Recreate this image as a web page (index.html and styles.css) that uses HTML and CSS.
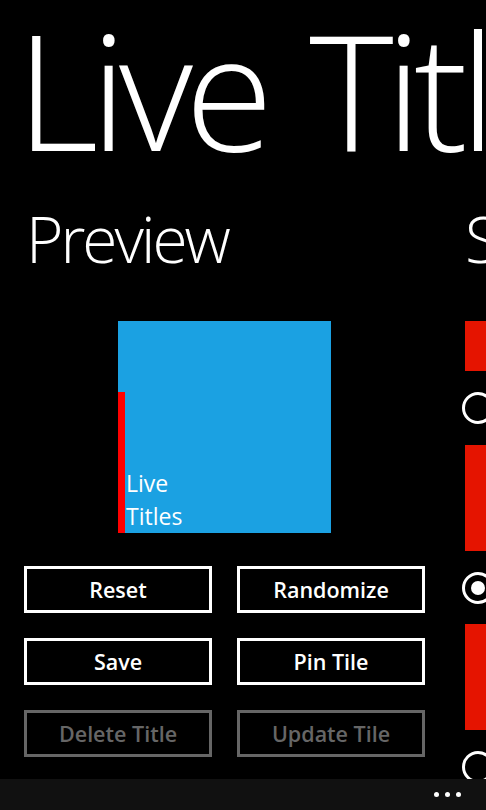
FILE: index.html
```html
<!DOCTYPE html>
<html>
<head>
<meta charset="utf-8">
<link rel="stylesheet" href="styles.css">
</head>
<body>
<div class="screen">
  <div class="panorama">
    <div class="pano-title">Live Titles</div>
    <div class="sections">
      <section class="section preview">
        <h2 class="section-header">Preview</h2>
        <div class="tile">
          <div class="tile-bar"></div>
          <div class="tile-text">Live<br>Titles</div>
        </div>
        <div class="buttons">
          <button class="btn">Reset</button>
          <button class="btn">Randomize</button>
          <button class="btn">Save</button>
          <button class="btn">Pin Tile</button>
          <button class="btn disabled">Delete Title</button>
          <button class="btn disabled">Update Tile</button>
        </div>
      </section>
      <section class="section settings">
        <h2 class="section-header">Settings</h2>
        <div class="swatch s1"></div>
        <div class="radio"></div>
        <div class="swatch s2"></div>
        <div class="radio checked"></div>
        <div class="swatch s3"></div>
        <div class="radio"></div>
      </section>
    </div>
  </div>
  <div class="appbar">
    <div class="dots"><span></span><span></span><span></span></div>
  </div>
</div>
</body>
</html>
```
FILE: styles.css
```css
html, body {
  margin: 0;
  padding: 0;
  background: #000;
}
body {
  width: 486px;
  height: 810px;
  overflow: hidden;
  font-family: "Open Sans", "Noto Sans", sans-serif;
  color: #fff;
}
.screen {
  display: flex;
  flex-direction: column;
  height: 810px;
}
.panorama {
  flex: 1;
  overflow: hidden;
  display: flex;
  flex-direction: column;
}
.pano-title {
  font-size: 161px;
  font-weight: 300;
  line-height: 161px;
  white-space: nowrap;
  margin-top: 8px;
  padding-left: 16px;
  letter-spacing: -8px;
  word-spacing: 10px;
}
.sections {
  display: flex;
  margin-top: 30px;
}
.section {
  flex: none;
}
.preview {
  width: 465px;
  padding-left: 24px;
  box-sizing: border-box;
}
.section-header {
  margin: 0;
  font-size: 64px;
  font-weight: 300;
  line-height: 80px;
  white-space: nowrap;
  padding-left: 2px;
  letter-spacing: -3px;
}
.tile {
  width: 213px;
  height: 212px;
  margin: 42px 0 0 94px;
  background: #1ba1e2;
  display: flex;
  align-items: flex-end;
}
.tile-bar {
  width: 7px;
  height: 141px;
  background: #ff0000;
}
.tile-text {
  font-family: "Open Sans", sans-serif;
  font-size: 23px;
  line-height: 33px;
  padding-left: 1px;
  padding-bottom: 0;
}
.buttons {
  display: grid;
  grid-template-columns: 188px 188px;
  column-gap: 25px;
  row-gap: 25px;
  margin-top: 33px;
}
.btn {
  height: 47px;
  background: #000;
  border: 3px solid #fff;
  color: #fff;
  font-family: "Open Sans", sans-serif;
  font-weight: 600;
  font-size: 21.5px;
  padding: 0;
}
.btn.disabled {
  border-color: #666;
  color: #666;
}
.settings {
  width: 300px;
}
.settings .section-header {
  padding-left: 0;
}
.swatch {
  background: #e51400;
  width: 60px;
}
.s1 { height: 50px; margin-top: 42px; }
.s2 { height: 106px; margin-top: 21px; }
.s3 { height: 106px; margin-top: 20px; }
.radio {
  width: 26px;
  height: 26px;
  border: 3px solid #fff;
  border-radius: 50%;
  margin-top: 21px;
  margin-left: -3px;
  display: flex;
  align-items: center;
  justify-content: center;
}
.radio.checked::after {
  content: "";
  width: 14px;
  height: 14px;
  border-radius: 50%;
  background: #fff;
}
.appbar {
  height: 31px;
  background: #111;
  display: flex;
  justify-content: flex-end;
  align-items: center;
  padding-right: 25px;
}
.dots {
  display: flex;
  gap: 6px;
  padding-bottom: 1px;
}
.dots span {
  width: 5px;
  height: 5px;
  border-radius: 50%;
  background: #fff;
}
```
